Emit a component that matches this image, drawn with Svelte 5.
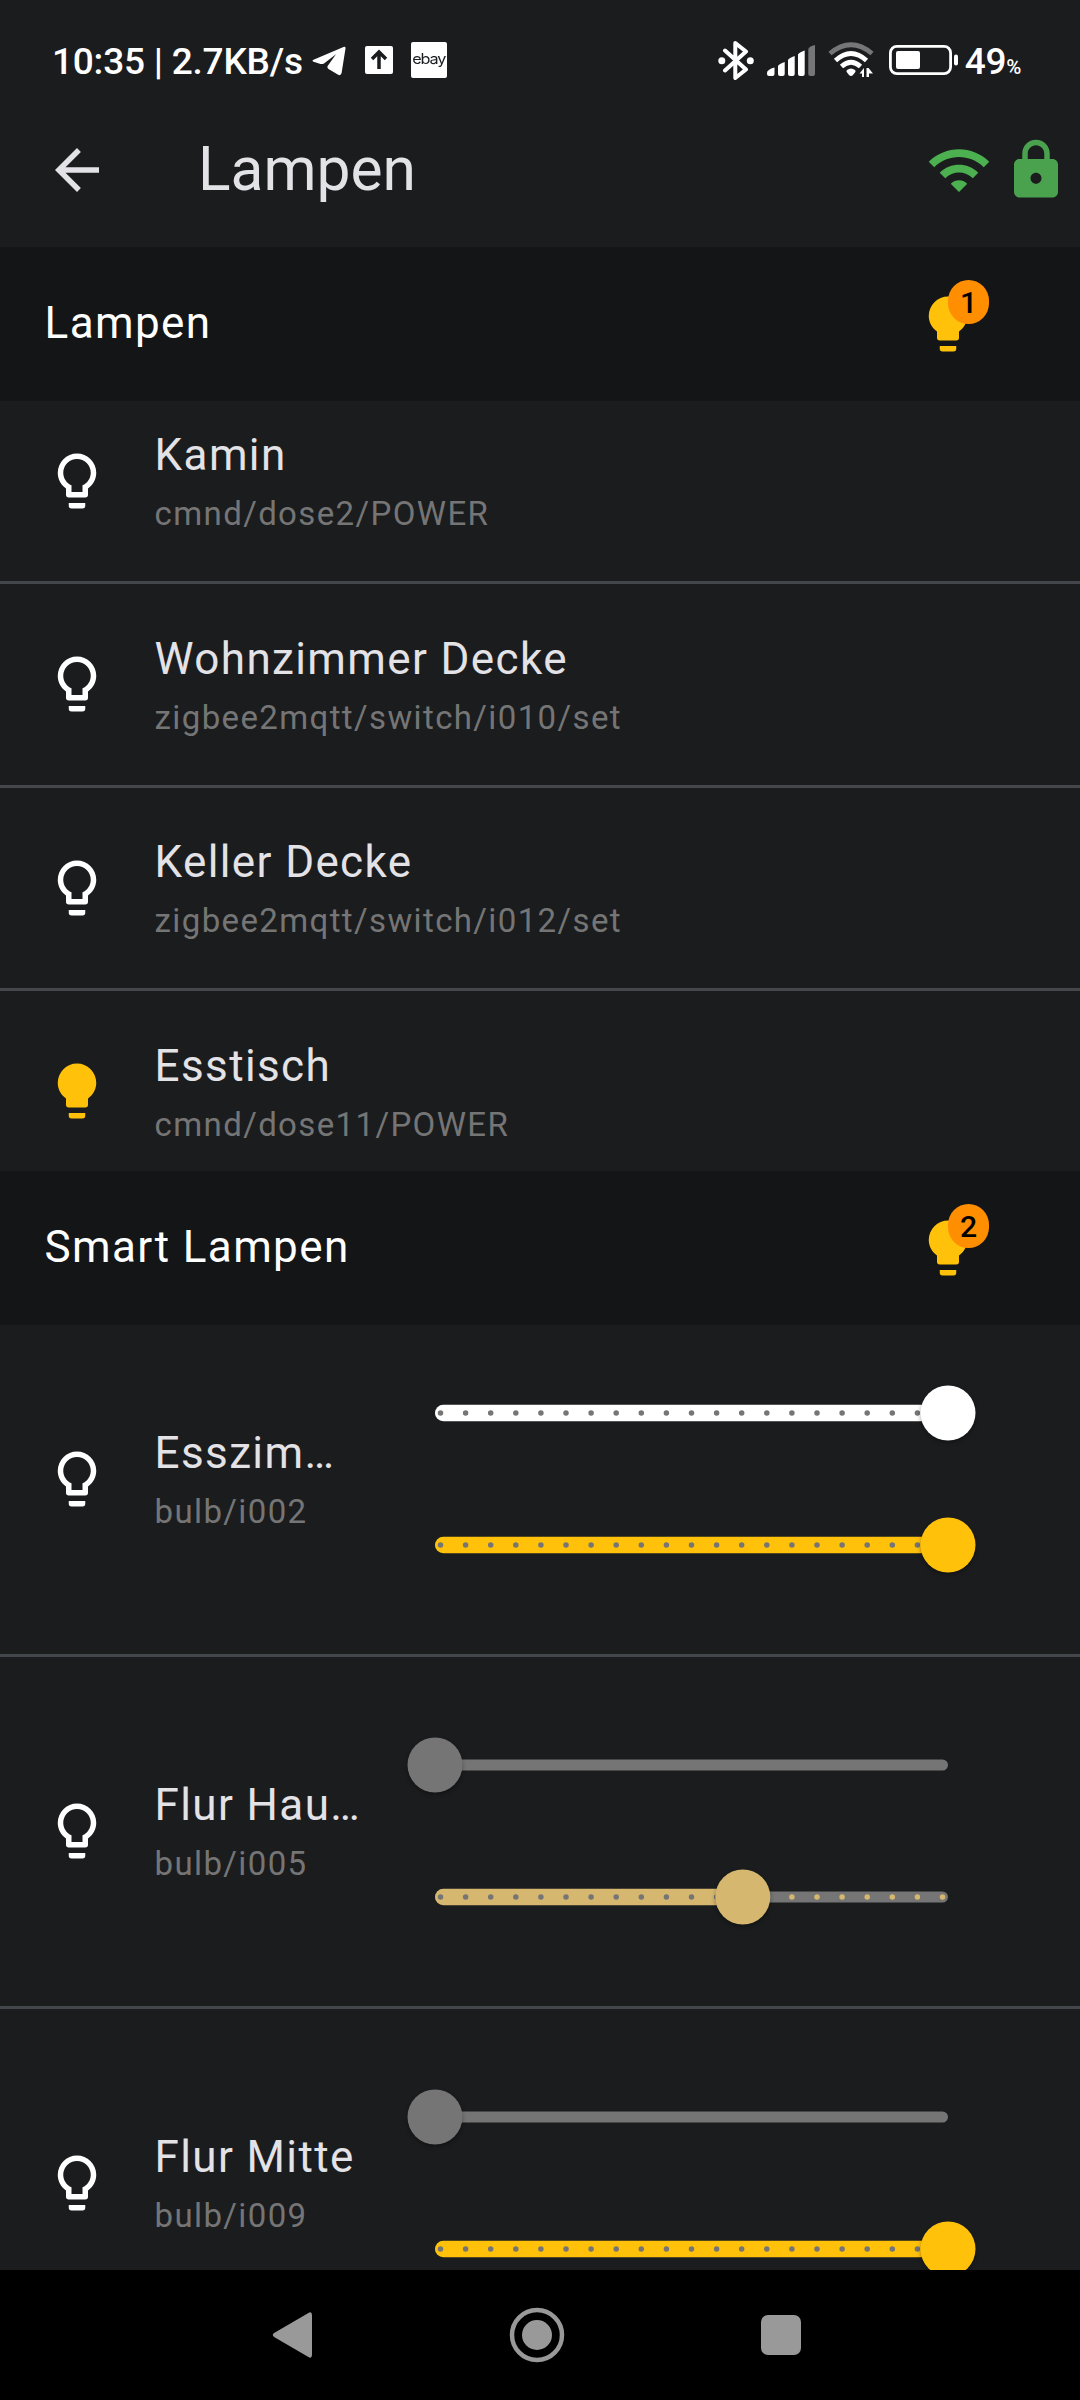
<script>
  const lamps = [
    { name: 'Kamin', topic: 'cmnd/dose2/POWER', on: false },
    { name: 'Wohnzimmer Decke', topic: 'zigbee2mqtt/switch/i010/set', on: false },
    { name: 'Keller Decke', topic: 'zigbee2mqtt/switch/i012/set', on: false },
    { name: 'Esstisch', topic: 'cmnd/dose11/POWER', on: true },
  ];

  const smartLamps = [
    { name: 'Esszim…', topic: 'bulb/i002', sliders: [{ value: 1, tone: 'white' }, { value: 1, tone: 'amber' }] },
    { name: 'Flur Hau…', topic: 'bulb/i005', sliders: [{ value: 0, tone: 'grey' }, { value: 0.6, tone: 'sand' }] },
    { name: 'Flur Mitte', topic: 'bulb/i009', sliders: [{ value: 0, tone: 'grey' }, { value: 1, tone: 'amber' }] },
  ];

  const inset = 33;
  const trackWidth = 513;
  const thumbX = (value) => inset + trackWidth * value;
  const ticks = Array.from({ length: 21 }, (_, i) => ({ ratio: i / 20, x: inset + 5.5 + 25.1 * i }));
</script>

{#snippet bulb(on)}
  <svg class="icon" class:on viewBox="0 0 24 24">
    {#if on}
      <path d="M12 2a7 7 0 0 1 7 7c0 2.38-1.19 4.47-3 5.74V17a1 1 0 0 1-1 1H9a1 1 0 0 1-1-1v-2.26C6.19 13.47 5 11.38 5 9a7 7 0 0 1 7-7M9 21v-1h6v1a1 1 0 0 1-1 1h-4a1 1 0 0 1-1-1" />
    {:else}
      <path d="M12 2a7 7 0 0 1 7 7c0 2.38-1.19 4.47-3 5.74V17a1 1 0 0 1-1 1H9a1 1 0 0 1-1-1v-2.26C6.19 13.47 5 11.38 5 9a7 7 0 0 1 7-7M9 21v-1h6v1a1 1 0 0 1-1 1h-4a1 1 0 0 1-1-1M12 4a5 5 0 0 0-5 5c0 2.05 1.23 3.81 3 4.58V16h4v-2.42c1.77-.77 3-2.53 3-4.58a5 5 0 0 0-5-5z" />
    {/if}
  </svg>
{/snippet}

{#snippet section(title, count)}
  <header class="section">
    <h2>{title}</h2>
    <div class="badged">
      {@render bulb(true)}
      <span class="badge">{count}</span>
    </div>
  </header>
{/snippet}

{#snippet slider(value, tone)}
  <svg class="slider {tone}" viewBox="0 0 579 132">
    <rect class="rest" x={inset} y="60.5" width={trackWidth} height="11" rx="5.5" />
    {#if value > 0}
      <path class="tone" d="M{thumbX(value)} 57.75H{inset + 8.25}a8.25 8.25 0 0 0 0 16.5H{thumbX(value)}z" />
      {#each ticks as tick}
        <circle class={tick.ratio <= value ? 'tick' : 'tone'} cx={tick.x} cy="66" r="2.75" />
      {/each}
    {/if}
    <circle class="tone thumb" cx={thumbX(value)} cy="66" r="27.5" />
  </svg>
{/snippet}

<div class="screen">
  <div class="status">
    <span class="clock">10:35 | 2.7KB/s</span>
    <svg class="telegram" viewBox="0 0 34 30">
      <path d="M1.500 13.700 31.500.9q2.200-.8 2 1.500L29.600 27q-.8 3-3.400 1.800L16.500 23q-1.800-1.400-.7-3.300L24 8.200 12 17.400q-1.700 1-3.500.5L1.500 15.700q-2-.9 0-2z" />
    </svg>
    <svg class="upload" viewBox="0 0 28 28">
      <rect width="28" height="28" rx="2" />
      <path d="M14 23V6.500M7 13 14 6l7 7" />
    </svg>
    <span class="ebay"><span>ebay</span></span>
    <div class="system">
      <svg class="bluetooth" viewBox="0 0 36 39">
        <path d="M7 9.500 28 28.500 17.300 37V2L28 10.500 7 29.500" />
        <circle cx="3.800" cy="19.800" r="3.500" />
        <circle cx="32.300" cy="19.800" r="3.500" />
      </svg>
      <svg class="signal" viewBox="0 0 48 31">
        <path d="M0 28q0-3.500 7.500-5.500v6.500q0 2-2 2H2q-2 0-2-2zM11 21q1-2 6.700-4v12q0 2-2 2h-2.700q-2 0-2-2zM21 15q1-2 6.700-4v18q0 2-2 2h-2.700q-2 0-2-2zM31 9.500q1-2 6.700-4v23.500q0 2-2 2h-2.700q-2 0-2-2z" />
        <path class="dim" d="M41.300 4q1-3 6.700-4v29q0 2-2 2h-2.700q-2 0-2-2z" />
      </svg>
      <svg class="wifi-status" viewBox="0 0 46 36">
        <path class="arc dim" d="M2 11.500q21-17.500 42 0" />
        <path class="arc" d="M7.500 18.500q15.500-14 31 0M13.500 24.500q9.500-8.500 19 0" />
        <path d="M19 28q4-3 8 0 1 .8.300 2l-2.300 3q-2 1.800-4 0l-2.300-3q-.7-1.200.3-2z" />
        <path d="M31.500 31.500 36 26v9h-2v-3.500zM38.500 35v-9h2l4.500 5.500h-4V35z" />
      </svg>
      <svg class="battery" viewBox="0 0 70 30">
        <rect class="shell" x="1.400" y="1.400" width="60.200" height="27.200" rx="6.500" />
        <rect x="7" y="6" width="24" height="18" rx="2" />
        <rect x="65" y="9.500" width="4" height="11" rx="2" />
      </svg>
      <span class="level">49<span class="percent">%</span></span>
    </div>
  </div>

  <div class="appbar">
    <svg class="icon back" viewBox="0 0 24 24"><path d="M20 11H7.830l5.590-5.590L12 4l-8 8 8 8 1.410-1.410L7.830 13H20v-2z" /></svg>
    <h1>Lampen</h1>
    <svg class="icon wifi" viewBox="0 0 24 24"><path d="M1 9l2 2c4.970-4.970 13.030-4.970 18 0l2-2C16.930 2.930 7.080 2.930 1 9zm8 8l3 3 3-3c-1.650-1.660-4.340-1.660-6 0zm-4-4l2 2c2.760-2.760 7.240-2.760 10 0l2-2C15.140 9.140 8.870 9.140 5 13z" /></svg>
    <svg class="icon lock" viewBox="0 0 24 24"><path d="M18 8h-1V6c0-2.760-2.240-5-5-5S7 3.240 7 6v2H6c-1.100 0-2 .9-2 2v10c0 1.100.9 2 2 2h12c1.100 0 2-.9 2-2V10c0-1.100-.9-2-2-2zm-6 9c-1.100 0-2-.9-2-2s.9-2 2-2 2 .9 2 2-.9 2-2 2zm3-9H9V6c0-1.660 1.340-3 3-3s3 1.340 3 3v2z" /></svg>
  </div>

  <main>
    {@render section('Lampen', 1)}
    {#each lamps as lamp, i}
      {#if i > 0}<div class="divider"></div>{/if}
      <div class="tile">
        {@render bulb(lamp.on)}
        <div class="text">
          <div class="name">{lamp.name}</div>
          <div class="topic">{lamp.topic}</div>
        </div>
      </div>
    {/each}

    {@render section('Smart Lampen', 2)}
    {#each smartLamps as lamp, i}
      {#if i > 0}<div class="divider"></div>{/if}
      <div class="tile smart">
        {@render bulb(false)}
        <div class="text">
          <div class="name">{lamp.name}</div>
          <div class="topic">{lamp.topic}</div>
        </div>
        <div class="sliders">
          {#each lamp.sliders as s}
            {@render slider(s.value, s.tone)}
          {/each}
        </div>
      </div>
    {/each}
  </main>

  <nav>
    <svg viewBox="0 0 64 64"><path d="M13.500 29.800 47 10.200q4-2.400 4 2v39.600q0 4.400-4 2L13.500 34.200q-3.500-2.200 0-4.400z" /></svg>
    <svg viewBox="0 0 64 64"><circle class="ring" cx="32" cy="32" r="25" /><circle cx="32" cy="32" r="15" /></svg>
    <svg viewBox="0 0 64 64"><rect x="12" y="12" width="40" height="40" rx="7" /></svg>
  </nav>
</div>

<style>
  :global(body) {
    background: #1b1c1e;
  }

  .screen {
    display: flex;
    flex-direction: column;
    width: 1080px;
    height: 2400px;
    overflow: hidden;
    background: #1b1c1e;
    color: #e3e2e6;
    font-family: Roboto, sans-serif;
  }

  svg {
    display: block;
    flex: none;
    fill: currentColor;
  }

  h1,
  h2 {
    margin: 0;
    font-weight: 400;
  }

  .icon {
    width: 66px;
    height: 66px;
    color: #fff;
  }

  .icon.on {
    color: #ffc10a;
  }

  /* status bar */
  .status {
    display: flex;
    align-items: center;
    box-sizing: border-box;
    flex: none;
    height: 93px;
    padding: 27px 59px 0 52px;
    color: #fff;
    font-size: 37px;
    font-weight: 500;
    line-height: 66px;
    white-space: nowrap;
  }

  .clock {
    width: 260px;
    padding-top: 3px;
    letter-spacing: -0.22px;
  }

  .telegram {
    width: 34px;
    height: 30px;
    margin-top: 2px;
  }

  .upload {
    width: 28px;
    height: 28px;
    margin-left: 19px;
  }

  .upload path {
    fill: none;
    stroke: #1b1c1e;
    stroke-width: 3.5;
  }

  .ebay {
    display: flex;
    justify-content: center;
    width: 36px;
    height: 36px;
    margin-left: 18px;
    border-radius: 2px;
    background: #fff;
    color: #1b1c1e;
    font-family: Inter, sans-serif;
    font-size: 14.5px;
    font-weight: 400;
    line-height: 33px;
    letter-spacing: -1px;
  }

  .ebay span {
    transform: scaleX(1.12);
  }

  .system {
    display: flex;
    align-items: center;
    margin-left: auto;
  }

  .bluetooth {
    width: 36px;
    height: 39px;
  }

  .bluetooth path {
    fill: none;
    stroke: currentColor;
    stroke-width: 4;
    stroke-linejoin: round;
    stroke-linecap: round;
  }

  .signal {
    width: 48px;
    height: 31px;
    margin-left: 13px;
  }

  .wifi-status {
    width: 46px;
    height: 36px;
    margin-left: 13px;
  }

  .wifi-status .arc {
    fill: none;
    stroke: currentColor;
    stroke-width: 4.8;
  }

  .dim {
    opacity: 0.4;
  }

  .battery {
    width: 70px;
    height: 30px;
    margin-left: 15px;
  }

  .battery .shell {
    fill: none;
    stroke: currentColor;
    stroke-width: 2.8;
  }

  .level {
    padding-top: 3px;
    margin-left: 6px;
    letter-spacing: -0.3px;
  }

  .percent {
    font-size: 20.5px;
    line-height: 0;
  }

  /* app bar */
  .appbar {
    display: flex;
    align-items: center;
    flex: none;
    height: 154px;
    padding: 0 11px 0 44px;
  }

  .icon.back {
    color: #e3e2e6;
  }

  h1 {
    flex: 1;
    padding-bottom: 2px;
    margin-left: 88px;
    font-size: 60.5px;
    line-height: 77px;
  }

  .icon.wifi {
    color: #4caf50;
  }

  .icon.lock {
    margin-left: 11px;
    color: #4aa24e;
  }

  /* lists */
  main {
    flex: 1;
    min-height: 0;
    overflow: hidden;
  }

  .section {
    display: flex;
    align-items: center;
    justify-content: space-between;
    height: 154px;
    padding: 0 99px 0 44.6px;
    background: #141517;
    color: #fff;
  }

  h2,
  .name {
    font-size: 44px;
    line-height: 66px;
    letter-spacing: 1.375px;
  }

  h2 {
    padding-bottom: 2px;
  }

  .badged {
    position: relative;
  }

  .badge {
    position: absolute;
    top: -11px;
    left: 33px;
    width: 41px;
    height: 44px;
    border-radius: 22px;
    background: #ff8f00;
    color: #000;
    font-size: 30.25px;
    font-weight: 500;
    line-height: 45px;
    text-align: center;
  }

  .tile {
    display: flex;
    align-items: center;
    height: 159.5px;
    padding: 0 44px;
  }

  .tile.smart {
    height: 308px;
  }

  .text {
    flex: 1;
    min-width: 0;
    margin-left: 44.6px;
  }

  .smart .text {
    padding-bottom: 2px;
  }

  .name {
    overflow: hidden;
    text-overflow: ellipsis;
    white-space: nowrap;
  }

  .topic {
    color: #757575;
    font-size: 33px;
    line-height: 51px;
    letter-spacing: 1.375px;
  }

  .divider {
    display: flex;
    align-items: center;
    height: 44px;
  }

  .divider::before {
    content: '';
    flex: 1;
    height: 3px;
    background: #43474b;
  }

  .sliders {
    margin: 0 55px 0 37px;
  }

  .slider {
    width: 579px;
    height: 132px;
    overflow: visible;
    color: #757575;
  }

  .slider .rest {
    fill: #757575;
  }

  .slider .tone {
    fill: currentColor;
  }

  .slider .tick {
    fill: #757575;
  }

  .slider .thumb {
    filter: drop-shadow(0 2px 2px rgb(0 0 0 / 0.35));
  }

  .slider.white {
    color: #fff;
  }

  .slider.amber {
    color: #ffc10a;
  }

  .slider.sand {
    color: #d5b76f;
  }

  /* navigation bar */
  nav {
    display: flex;
    align-items: center;
    justify-content: center;
    gap: 180px;
    flex: none;
    height: 130px;
    padding-right: 7px;
    background: #000;
    color: #999;
  }

  nav svg {
    width: 64px;
    height: 64px;
  }

  nav .ring {
    fill: none;
    stroke: currentColor;
    stroke-width: 4.5;
  }
</style>
